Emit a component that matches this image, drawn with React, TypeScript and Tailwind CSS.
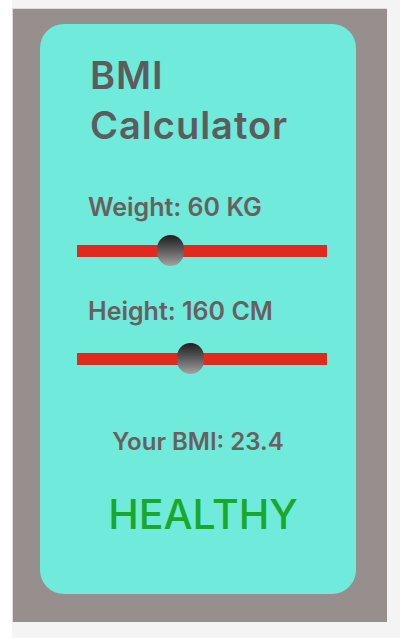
import React from 'react';

const Slider = ({ offset }: { offset: number }) => (
    <div className="relative ml-[37px] h-[12px] w-[250px] bg-[#e12a1f]">
        {/* thumb */}
        <div
            className="absolute top-[-10px] h-[31px] w-[27px] rounded-full bg-gradient-to-b from-[#1f1f1f] to-[#a3a3a3]"
            style={{ left: offset }}
        />
    </div>
);

const App = () => {
    const weight = 60;
    const height = 160;
    const bmi = (weight / ((height / 100) * (height / 100))).toFixed(1);

    return (
        <div className="min-h-screen bg-white font-['Inter',sans-serif]">
            <div className="ml-3 min-h-[638px] bg-[#f4f4f4] pt-2">
                <div className="w-[375px] border-l border-t border-[#dcdcdc] bg-[#968f8e] pb-[28px] pl-[27px] pt-[15px]">
                    <div className="flex h-[570px] w-[316px] flex-col rounded-[24px] bg-[#70eadb] pt-[26px]">
                        <h1 className="pl-[50px] text-[38px] font-semibold leading-[50px] tracking-[1px] text-[#5c5c5c]">
                            BMI
                            <br />
                            Calculator
                        </h1>

                        <p className="mt-[42px] pl-[48px] text-[25px] font-semibold leading-[30px] text-[#6a5f5f]">
                            Weight: {weight} KG
                        </p>
                        <div className="mt-[23px]">
                            <Slider offset={80} />
                        </div>

                        <p className="mt-[39px] pl-[48px] text-[25px] font-semibold leading-[30px] text-[#6a5f5f]">
                            Height: {height} CM
                        </p>
                        <div className="mt-[27px]">
                            <Slider offset={100} />
                        </div>

                        <p className="mt-[63px] text-center text-[24px] font-semibold leading-[1.2] text-[#6a5f5f]">
                            Your BMI: {bmi}
                        </p>
                        <p className="mt-[33px] pl-[10px] text-center text-[41px] font-medium leading-[1.2] text-[#1aa82a]">
                            HEALTHY
                        </p>
                    </div>
                </div>
            </div>
        </div>
    );
};

export default App;
